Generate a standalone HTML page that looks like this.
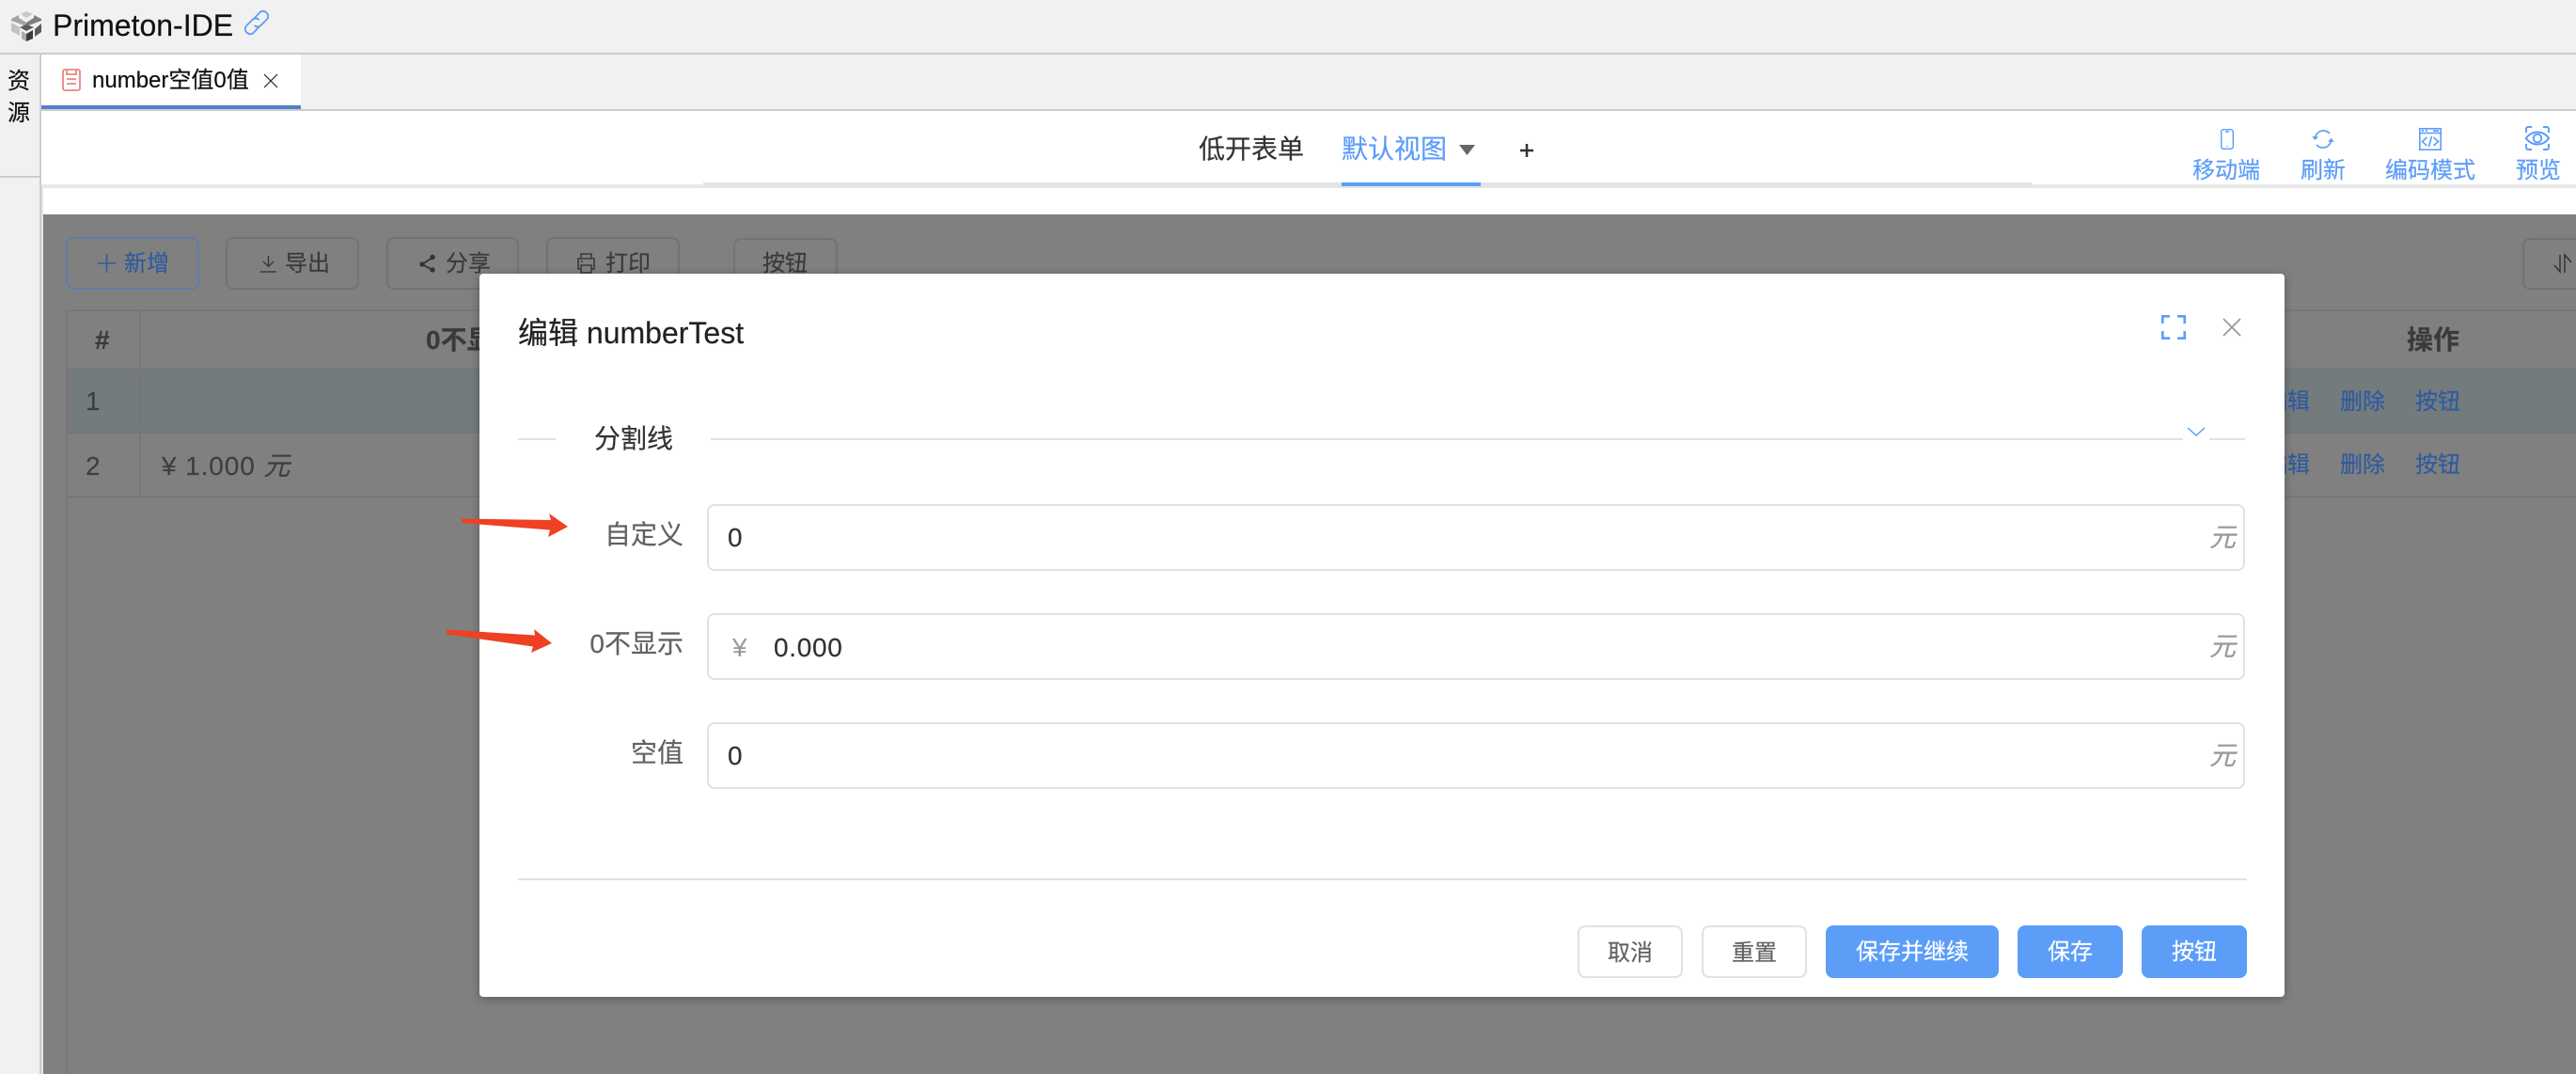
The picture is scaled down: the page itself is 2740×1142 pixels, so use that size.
<!DOCTYPE html>
<html lang="zh"><head><meta charset="utf-8"><title>Primeton-IDE</title>
<style>
html,body{margin:0;padding:0;width:2740px;height:1142px;overflow:hidden;background:#fff}
body{position:relative;font-family:"Liberation Sans","Noto Sans CJK SC",sans-serif}
.a{position:absolute;box-sizing:border-box}
.t{position:absolute;white-space:nowrap;height:40px;line-height:40px;font-size:28px;-webkit-text-stroke:.2px}
.r{text-align:right}.c{text-align:center}
svg{position:absolute;overflow:visible}
.tb{position:absolute;box-sizing:border-box;top:252px;height:56px;width:142px;border:2px solid #727278;border-radius:8px}
.inp{position:absolute;box-sizing:border-box;left:752px;width:1636px;height:71px;border:2px solid #e0e0e6;border-radius:8px;background:#fff}
.btn{position:absolute;box-sizing:border-box;top:984px;height:56px;border-radius:8px;text-align:center;line-height:57px;font-size:24px;background:#5c9df8;color:#fff;-webkit-text-stroke:.2px}
.btn.o{background:#fff;border:2px solid #e0e0e6;color:#606266;line-height:55px}
.lnk{color:#2f5b9f;font-size:24px}
.n{letter-spacing:.55px}
</style></head><body>

<!-- top bar -->
<div class="a" style="left:0;top:0;width:2740px;height:58px;background:#f1f1f1;border-bottom:2px solid #ccc"></div>
<svg style="left:0;top:0" width="60" height="56" viewBox="0 0 60 56">
<polygon points="22,15 28,12 35,15 28,19" fill="#c8c8c8"/>
<polygon points="12,20 20,16 20,19 28,24 28,28 12,22" fill="#a4a4a4"/>
<polygon points="36,16 44,20 44,22 28,28 28,24 36,19" fill="#7e7e7e"/>
<polygon points="12,24 21,29 21,38 12,33" fill="#c2c2c2"/>
<polygon points="21,29 28,26 36,29 28,33" fill="#5c5c5c"/>
<polygon points="23,33 28,36 28,44 23,41" fill="#a8a8a8"/>
<polygon points="28,36 35,32 35,41 28,44" fill="#3a3a3a"/>
<polygon points="37,31 44,25 44,34 37,39" fill="#5a5a5a"/>
</svg>
<div class="t" style="left:56px;top:7px;font-size:32px;color:#111">Primeton-IDE</div>
<svg style="left:258px;top:9px" width="30" height="30" viewBox="0 0 30 30" fill="none" stroke="#5c9df8" stroke-width="1.800">
<path d="M12.500 10.500l5.500-6a5 5 0 0 1 7.500 0 5 5 0 0 1 0 7.500l-6 6a5 5 0 0 1-7 0"/>
<path d="M17.500 19.500l-5.500 6a5 5 0 0 1-7.500 0 5 5 0 0 1 0-7.500l6-6a5 5 0 0 1 7 0"/>
</svg>

<!-- sidebar -->
<div class="a" style="left:0;top:58px;width:44px;height:1084px;background:#f1f1f1;border-right:2px solid #ccc"></div>
<div class="a" style="left:0;top:187px;width:42px;height:2px;background:#ccc"></div>
<div class="t c" style="left:-1px;top:67px;width:42px;font-size:24px;color:#111">资</div>
<div class="t c" style="left:-1px;top:101px;width:42px;font-size:24px;color:#111">源</div>

<!-- tabs -->
<div class="a" style="left:44px;top:58px;width:2696px;height:60px;background:#f1f1f1;border-bottom:2px solid #ccc"></div>
<div class="a" style="left:44px;top:58px;width:276px;height:58px;background:#fff;border-bottom:4px solid #4f81c7"></div>
<svg style="left:66px;top:73px" width="20" height="24" viewBox="0 0 20 24" fill="none" stroke="#e98585" stroke-width="1.800">
<rect x="1" y="1" width="18" height="22" rx="2"/><path d="M5 1v5h10V1M5 11h10M5 16h10"/>
</svg>
<div class="t" style="left:98px;top:66px;font-size:24px;color:#111">number空值0值</div>
<svg style="left:280px;top:78px" width="16" height="16" viewBox="0 0 16 16" stroke="#222" stroke-width="1.200"><path d="M1 1l14 14M15 1L1 15"/></svg>

<!-- designer header -->
<div class="a" style="left:44px;top:196px;width:2696px;height:4px;background:#e8e8e8"></div>
<div class="a" style="left:748px;top:194px;width:1413px;height:6px;background:#e4e4e8"></div>
<div class="t" style="left:1275px;top:139px;color:#333">低开表单</div>
<div class="t" style="left:1427px;top:139px;color:#5c9df8">默认视图</div>
<svg style="left:1552px;top:154px" width="17" height="11"><polygon points="0,0 17,0 8.500,11" fill="#666"/></svg>
<svg style="left:1617px;top:153px" width="14" height="14" stroke="#333" stroke-width="2.500"><path d="M0 7h14M7 0v14"/></svg>
<div class="a" style="left:1427px;top:194px;width:148px;height:4px;background:#5c9df8"></div>

<svg style="left:2362px;top:137px" width="14" height="22" fill="none" stroke="#5c9df8" stroke-width="1.400"><rect x=".7" y=".7" width="12.600" height="20.600" rx="2.500"/><path d="M5 3h4M6.500 18.500h1"/></svg>
<svg style="left:2459px;top:137px" width="24" height="22" viewBox="0 0 24 22" fill="none" stroke="#5c9df8" stroke-width="1.600"><path d="M3.500 11A8.800 8.800 0 0 1 19 5"/><path d="M20.500 11A8.800 8.800 0 0 1 5 17"/><path d="M.8 8.500l2.700 3.200 2.700-3.200zM23.200 13.500l-2.700-3.200-2.700 3.200z" fill="#5c9df8" stroke-width=".6"/></svg>
<svg style="left:2573px;top:136px" width="24" height="24" viewBox="0 0 24 24" fill="none" stroke="#5c9df8" stroke-width="1.600"><rect x=".8" y=".8" width="22.400" height="22.400"/><path d="M.8 5.500h22.400"/><path d="M3 3.100h2M7 3.100h2M15 3.100h6" stroke-width="1.800"/><path d="M8.500 10l-5 4.500 5 4.500M15.500 10l5 4.500-5 4.500M13.500 9l-3 11"/></svg>
<svg style="left:2686px;top:134px" width="26" height="26" viewBox="0 0 26 26" fill="none" stroke="#5c9df8" stroke-width="1.900"><path d="M1 7V3a2 2 0 0 1 2-2h4M19 1h4a2 2 0 0 1 2 2v4M25 19v4a2 2 0 0 1-2 2h-4M7 25H3a2 2 0 0 1-2-2v-4"/><path d="M.8 13c3-4 7-6.500 12.200-6.500S22.200 9 25.200 13c-3 4-7 6.500-12.200 6.500S3.800 17 .8 13z"/><circle cx="13" cy="13" r="4.300"/></svg>
<div class="t" style="left:2332px;top:162px;font-size:24px;color:#5c9df8">移动端</div>
<div class="t" style="left:2447px;top:162px;font-size:24px;color:#5c9df8">刷新</div>
<div class="t" style="left:2537px;top:162px;font-size:24px;color:#5c9df8">编码模式</div>
<div class="t" style="left:2676px;top:162px;font-size:24px;color:#5c9df8">预览</div>

<!-- dimmed page -->
<div class="a" style="left:44px;top:200px;width:2px;height:942px;background:#e4e4e4"></div>
<div class="a" style="left:46px;top:228px;width:2694px;height:914px;background:#808080"></div>

<div class="tb" style="left:70px;border-color:#5c7ea8"></div>
<svg style="left:104px;top:270px" width="19" height="20" stroke="#2f5b9f" stroke-width="1.600"><path d="M0 10h19M9.500 0v20"/></svg>
<div class="t lnk" style="left:132px;top:261px">新增</div>
<div class="tb" style="left:240px"></div>
<svg style="left:277px;top:272px" width="17" height="18" fill="none" stroke="#3a3a3a" stroke-width="1.500"><path d="M8.500 0v11M3 6l5.500 5.500L14 6M0 17h17"/></svg>
<div class="t" style="left:303px;top:261px;font-size:24px;color:#3a3a3a">导出</div>
<div class="tb" style="left:411px;width:141px"></div>
<svg style="left:445px;top:271px" width="19" height="18" fill="#333" stroke="#333" stroke-width="1.800"><path d="M15 3L4 10l11 6" fill="none"/><circle cx="15" cy="2.500" r="1.800"/><circle cx="4" cy="10" r="1.800"/><circle cx="15" cy="16" r="1.800"/></svg>
<div class="t" style="left:474px;top:261px;font-size:24px;color:#3a3a3a">分享</div>
<div class="tb" style="left:581px"></div>
<svg style="left:614px;top:269px" width="19" height="22" fill="none" stroke="#3a3a3a" stroke-width="1.600"><path d="M4 6V1h11v5M4 17H1V6h17v11h-3M4 13h11v8H4zM4 9h2"/></svg>
<div class="t" style="left:644px;top:261px;font-size:24px;color:#3a3a3a">打印</div>
<div class="tb" style="left:780px;width:111px;top:253px;height:55px"></div>
<div class="t" style="left:811px;top:261px;font-size:24px;color:#3a3a3a">按钮</div>
<div class="tb" style="left:2683px;width:80px;top:253px;height:55px"></div>
<svg style="left:2717px;top:270px" width="20" height="20" fill="none" stroke="#333" stroke-width="1.500"><path d="M0 12l6 7V1M11 20V1l7 8"/></svg>

<!-- table -->
<div class="a" style="left:70px;top:329px;width:2670px;height:200px;border:2px solid #777;border-right:0"></div>
<div class="a" style="left:72px;top:392px;width:2668px;height:68px;background:#737b7d"></div>
<div class="a" style="left:72px;top:391px;width:2668px;height:2px;background:#777"></div>
<div class="a" style="left:72px;top:459px;width:2668px;height:2px;background:#777"></div>
<div class="a" style="left:148px;top:329px;width:2px;height:199px;background:#777"></div>
<div class="a" style="left:70px;top:528px;width:2px;height:614px;background:#777"></div>
<div class="t" style="left:101px;top:342px;font-weight:bold;color:#3a3a3a">#</div>
<div class="t" style="left:453px;top:342px;font-weight:bold;color:#3a3a3a">0不显示</div>
<div class="t" style="left:2560px;top:342px;font-weight:bold;color:#3a3a3a">操作</div>
<div class="t" style="left:91px;top:407px;color:#3f3f3f">1</div>
<div class="t" style="left:91px;top:476px;color:#3f3f3f">2</div>
<div class="t" style="left:172px;top:476px;color:#3f3f3f;letter-spacing:.9px">¥ 1.000 <i>元</i></div>
<div class="t lnk" style="left:2409px;top:408px">编辑</div><div class="t lnk" style="left:2489px;top:408px">删除</div><div class="t lnk" style="left:2569px;top:408px">按钮</div>
<div class="t lnk" style="left:2409px;top:475px">编辑</div><div class="t lnk" style="left:2489px;top:475px">删除</div><div class="t lnk" style="left:2569px;top:475px">按钮</div>

<!-- modal -->
<div class="a" style="left:510px;top:291px;width:1920px;height:769px;background:#fff;border-radius:4px;box-shadow:0 2px 10px rgba(0,0,0,.3)"></div>
<div class="t" style="left:551px;top:334px;font-size:32px;color:#222">编辑 numberTest</div>
<svg style="left:2299px;top:335px" width="26" height="26" fill="none" stroke="#5c9df8" stroke-width="2.600"><path d="M1.300 9V1.300H9M17 1.300h7.700V9M24.700 17v7.700H17M9 24.700H1.300V17"/></svg>
<svg style="left:2364px;top:338px" width="20" height="20" stroke="#999" stroke-width="1.800"><path d="M1 1l18 18M19 1L1 19"/></svg>

<div class="a" style="left:551px;top:466px;width:40px;height:2px;background:#e0e0e6"></div>
<div class="t" style="left:632px;top:447px;color:#333">分割线</div>
<div class="a" style="left:756px;top:466px;width:1566px;height:2px;background:#e0e0e6"></div>
<svg style="left:2327px;top:454px" width="18" height="10" fill="none" stroke="#5c9df8" stroke-width="1.500"><path d="M0 1l9 8 9-8"/></svg>
<div class="a" style="left:2350px;top:466px;width:38px;height:2px;background:#e0e0e6"></div>

<div class="t r" style="left:600px;width:127px;top:549px;color:#606266">自定义</div>
<div class="t r" style="left:600px;width:127px;top:665px;color:#606266">0不显示</div>
<div class="t r" style="left:600px;width:127px;top:781px;color:#606266">空值</div>

<div class="inp" style="top:536px"></div>
<div class="inp" style="top:652px"></div>
<div class="inp" style="top:768px"></div>
<div class="t" style="left:774px;top:552px;color:#333">0</div>
<div class="t" style="left:779px;top:669px;color:#999;font-size:28px;-webkit-text-stroke:0">¥</div>
<div class="t" style="left:823px;top:669px;color:#333;letter-spacing:.7px">0.000</div>
<div class="t" style="left:774px;top:784px;color:#333">0</div>
<div class="t" style="left:2350px;top:552px;color:#999;font-style:italic">元</div>
<div class="t" style="left:2350px;top:668px;color:#999;font-style:italic">元</div>
<div class="t" style="left:2350px;top:784px;color:#999;font-style:italic">元</div>

<!-- arrows -->
<svg style="left:0;top:0" width="2740" height="1142"><g fill="#ee4023">
<polygon points="491,551.500 586,553 584,546 604,560 583,571 585,563.500 491,556"/>
<polygon points="475,669.500 569,675.500 568,669 587,684 565,694 567,687.500 475,674.500"/>
</g></svg>

<!-- footer -->
<div class="a" style="left:551px;top:934px;width:1839px;height:2px;background:#e0e0e6"></div>
<div class="btn o" style="left:1678px;width:112px">取消</div>
<div class="btn o" style="left:1810px;width:112px">重置</div>
<div class="btn" style="left:1942px;width:184px">保存并继续</div>
<div class="btn" style="left:2146px;width:112px">保存</div>
<div class="btn" style="left:2278px;width:112px">按钮</div>
</body></html>
